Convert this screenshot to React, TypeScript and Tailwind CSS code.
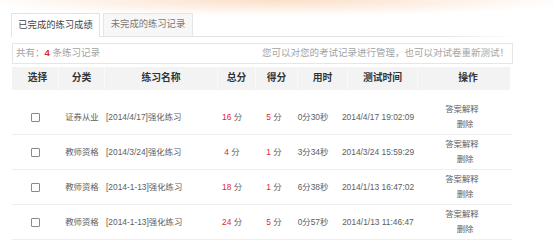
import React from "react";

const rows = [
  { cat: "证券从业", name: "[2014/4/17]强化练习", total: "16", score: "5", used: "0分30秒", time: "2014/4/17 19:02:09" },
  { cat: "教师资格", name: "[2014/3/24]强化练习", total: "4", score: "1", used: "3分34秒", time: "2014/3/24 15:59:29" },
  { cat: "教师资格", name: "[2014-1-13]强化练习", total: "18", score: "1", used: "6分38秒", time: "2014/1/13 16:47:02" },
  { cat: "教师资格", name: "[2014-1-13]强化练习", total: "24", score: "5", used: "0分57秒", time: "2014/1/13 11:46:47" },
];

const font = { fontFamily: '"Liberation Sans", "Noto Sans CJK SC", sans-serif' };

export default function App() {
  return (
    <div
      className="w-[554px] h-[252px] bg-white overflow-hidden bg-[radial-gradient(ellipse_300px_16px_at_50%_0,#fbdfc8,#fff)]"
      style={font}
    >
      <div className="pt-[13px] pl-[11px]">
        {/* tabs */}
        <div className="flex items-end h-[24px]">
          <div className="w-[89px] h-[24px] border border-b-0 border-[#e3e3e3] bg-white flex items-center justify-center text-[9.3px] text-[#444]">
            已完成的练习成绩
          </div>
          <div className="flex flex-col h-[24px]">
            <div className="flex items-end h-[23px]">
              <div className="w-[3px]" />
              <div className="w-[90px] h-[23px] border border-b-0 border-[#e6e6e6] bg-[#f7f7f7] flex items-center justify-center text-[9.3px] text-[#777]">
                未完成的练习记录
              </div>
            </div>
            <div className="h-px w-[418px] bg-linear-to-r from-[#e2e2e2] via-[#e2e2e2] via-80% to-transparent" />
          </div>
        </div>

        {/* info bar */}
        <div className="mt-[6px] ml-px w-[501px] h-[21px] border border-[#e6e6e6] flex items-center justify-between px-[3px] text-[9.5px] text-[#a3a3a3]">
          <span>
            共有：<span className="text-[#e0282c] font-bold">4</span> 条练习记录
          </span>
          <span>您可以对您的考试记录进行管理，也可以对试卷重新测试！</span>
        </div>

        {/* header */}
        <div className="mt-[3px] ml-px w-[498px] h-[23px] bg-[#f3f3f3] grid grid-cols-[47px_46px_113px_38px_42px_50px_70px_92px] items-center text-[9.8px] font-bold text-[#333]">
          <div className="h-full flex items-center justify-center pl-[5px] border-r border-[#f9f9f9]">选择</div>
          <div className="h-full flex items-center justify-center border-r border-[#f9f9f9]">分类</div>
          <div className="h-full flex items-center justify-center border-r border-[#f9f9f9]">练习名称</div>
          <div className="h-full flex items-center justify-center border-r border-[#f9f9f9]">总分</div>
          <div className="h-full flex items-center justify-center border-r border-[#f9f9f9]">得分</div>
          <div className="h-full flex items-center justify-center border-r border-[#f9f9f9]">用时</div>
          <div className="h-full flex items-center justify-center border-r border-[#f9f9f9]">测试时间</div>
          <div className="h-full flex items-center justify-center pl-[8px]">操作</div>
        </div>

        {/* rows */}
        <div className="mt-[10px] ml-px w-[500px]">
          {rows.map((r, i) => (
            <div
              key={i}
              className="h-[35px] border-b border-[#eeeeee] grid grid-cols-[47px_46px_107px_40px_44px_34px_96px_86px] items-center text-[8.4px] text-[#5e5e5e]"
            >
              <div className="flex justify-center">
                <span className="block w-[9px] h-[9px] border border-[#8a8a8a] rounded-[1px] bg-white" />
              </div>
              <div className="text-center">{r.cat}</div>
              <div className="pl-px whitespace-nowrap">{r.name}</div>
              <div className="text-center whitespace-nowrap">
                <span className="text-[#e0282c]">{r.total}</span> 分
              </div>
              <div className="text-center whitespace-nowrap">
                <span className="text-[#e0282c]">{r.score}</span> 分
              </div>
              <div className="text-center whitespace-nowrap">{r.used}</div>
              <div className="text-center whitespace-nowrap">{r.time}</div>
              <div className="flex flex-col items-center pr-[14px] leading-[15px]">
                <span>答案解释</span>
                <span className="pl-[6px]">删除</span>
              </div>
            </div>
          ))}
        </div>
      </div>
    </div>
  );
}
